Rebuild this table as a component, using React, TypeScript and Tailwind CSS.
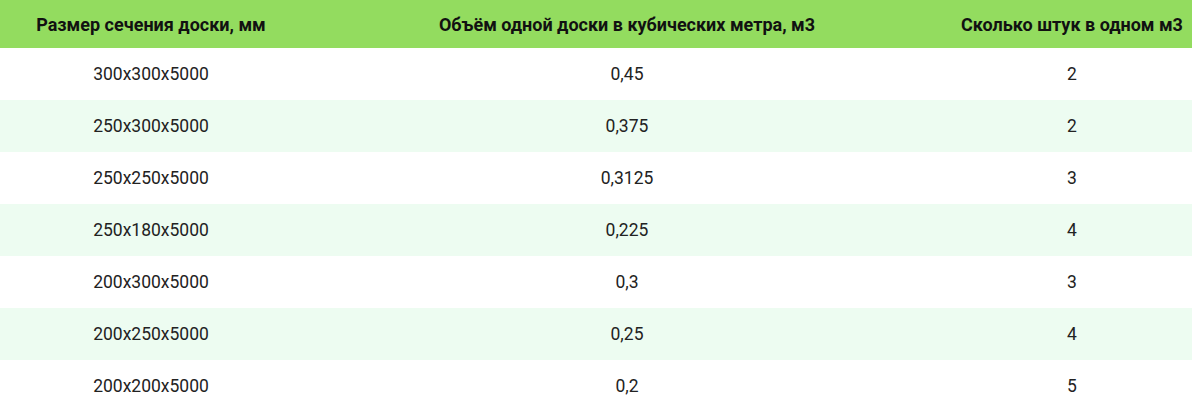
const ROWS = [
  ['300x300x5000', '0,45', '2'],
  ['250x300x5000', '0,375', '2'],
  ['250x250x5000', '0,3125', '3'],
  ['250x180x5000', '0,225', '4'],
  ['200x300x5000', '0,3', '3'],
  ['200x250x5000', '0,25', '4'],
  ['200x200x5000', '0,2', '5'],
]

export default function App() {
  return (
    <div className="w-[1192px] bg-white font-['Roboto',sans-serif] text-[#222]">
      <table className="w-full table-fixed border-collapse">
        <colgroup>
          <col className="w-[302px]" />
          <col className="w-[650px]" />
          <col className="w-[240px]" />
        </colgroup>
        <thead>
          <tr className="h-[48px] bg-[#93dc5f] text-[18px] font-bold text-[#111]">
            <th className="text-center">Размер сечения доски, мм</th>
            <th className="text-center">Объём одной доски в кубических метра, м3</th>
            <th className="text-center">Сколько штук в одном м3</th>
          </tr>
        </thead>
        <tbody>
          {ROWS.map((row, i) => (
            <tr key={i} className={`h-[52px] text-[17.5px] ${i % 2 ? 'bg-[#edfcf1]' : 'bg-white'}`}>
              {row.map((cell, j) => (
                <td key={j} className="text-center">{cell}</td>
              ))}
            </tr>
          ))}
        </tbody>
      </table>
    </div>
  )
}
